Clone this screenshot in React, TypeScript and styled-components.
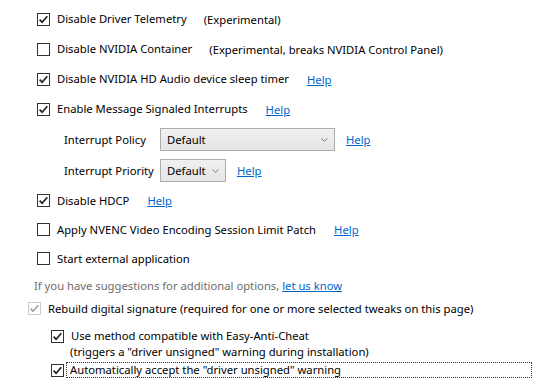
import styled, { createGlobalStyle } from "styled-components";

const GlobalStyle = createGlobalStyle`
  html, body {
    margin: 0;
    padding: 0;
    background: #ffffff;
  }
  body {
    font-family: "Noto Sans", "Open Sans", sans-serif;
    font-size: 11.25px;
    color: #000000;
  }
`;

const Page = styled.div`
  width: 548px;
  height: 392px;
  box-sizing: border-box;
  padding: 4px 0 0 37px;
  display: flex;
  flex-direction: column;
  overflow: hidden;
`;

const Row = styled.div<{ $h?: number; $indent?: number; $bottom?: boolean }>`
  display: flex;
  align-items: ${({ $bottom }) => ($bottom ? "flex-end" : "center")};
  height: ${({ $h }) => $h ?? 29}px;
  margin-left: ${({ $indent }) => $indent ?? 0}px;
  white-space: nowrap;
`;

const Box = styled.span<{ $disabled?: boolean }>`
  display: inline-flex;
  align-items: center;
  justify-content: center;
  flex: none;
  width: 13px;
  height: 13px;
  box-sizing: border-box;
  border: 1px solid ${({ $disabled }) => ($disabled ? "#cccccc" : "#333333")};
  background: #ffffff;
  margin-right: 6px;
`;

const Label = styled.span<{ $focus?: boolean }>`
  line-height: 14px;
  padding: 0 1px;
  ${({ $focus }) =>
    $focus
      ? `
    flex: 1;
    margin-right: 17px;
    margin-left: -3px;
    padding-left: 3px;
    outline: 1px dotted #333333;
  `
      : ""}
`;

const Note = styled.span`
  margin-left: 16px;
`;

const Link = styled.a<{ $gap?: number }>`
  color: #0066cc;
  text-decoration: underline;
  margin-left: ${({ $gap }) => $gap ?? 17}px;
  cursor: pointer;
`;

const Field = styled.span`
  width: 96px;
  margin-left: 27px;
`;

const Combo = styled.div<{ $w: number }>`
  display: flex;
  align-items: center;
  justify-content: space-between;
  box-sizing: border-box;
  width: ${({ $w }) => $w}px;
  height: 23px;
  padding: 0 6px 0 6px;
  border: 1px solid #adadad;
  background: linear-gradient(#f0f0f0, #e5e5e5);
`;

const Hint = styled.div`
  color: #6d6d6d;
  margin-left: -3px;
`;

const SubLine = styled.div`
  margin-left: 33px;
  line-height: 18px;
`;

function Check({ checked, disabled }: { checked?: boolean; disabled?: boolean }) {
  return (
    <Box $disabled={disabled}>
      {checked && (
        <svg width="11" height="11" viewBox="0 0 11 11">
          <path
            d="M1.6 5.6 L4.1 8.2 L9.3 2.2"
            fill="none"
            stroke={disabled ? "#a6a6a6" : "#222222"}
            strokeWidth="1.7"
          />
        </svg>
      )}
    </Box>
  );
}

function Chevron() {
  return (
    <svg width="7" height="4" viewBox="0 0 7 4">
      <path d="M0.5 0.5 L3.5 3.3 L6.5 0.5" fill="none" stroke="#7a7a7a" strokeWidth="1" />
    </svg>
  );
}

export default function App() {
  return (
    <>
      <GlobalStyle />
      <Page>
        <Row $h={30}>
          <Check checked />
          <Label>Disable Driver Telemetry</Label>
          <Note>(Experimental)</Note>
        </Row>
        <Row $h={30}>
          <Check />
          <Label>Disable NVIDIA Container</Label>
          <Note>(Experimental, breaks NVIDIA Control Panel)</Note>
        </Row>
        <Row $h={30}>
          <Check checked />
          <Label>Disable NVIDIA HD Audio device sleep timer</Label>
          <Link>Help</Link>
        </Row>
        <Row $h={30}>
          <Check checked />
          <Label>Enable Message Signaled Interrupts</Label>
          <Link>Help</Link>
        </Row>
        <Row $h={31}>
          <Field>Interrupt Policy</Field>
          <Combo $w={175}>
            <span>Default</span>
            <Chevron />
          </Combo>
          <Link $gap={11}>Help</Link>
        </Row>
        <Row $h={31}>
          <Field>Interrupt Priority</Field>
          <Combo $w={66}>
            <span>Default</span>
            <Chevron />
          </Combo>
          <Link $gap={11}>Help</Link>
        </Row>
        <Row>
          <Check checked />
          <Label>Disable HDCP</Label>
          <Link>Help</Link>
        </Row>
        <Row>
          <Check />
          <Label>Apply NVENC Video Encoding Session Limit Patch</Label>
          <Link>Help</Link>
        </Row>
        <Row>
          <Check />
          <Label>Start external application</Label>
        </Row>
        <Row $h={25}>
          <Hint>
            If you have suggestions for additional options, <Link $gap={0}>let us know</Link>
          </Hint>
        </Row>
        <Row $h={21} $indent={-9}>
          <Check checked disabled />
          <Label>Rebuild digital signature (required for one or more selected tweaks on this page)</Label>
        </Row>
        <Row $h={24} $indent={14} $bottom>
          <Check checked />
          <Label>Use method compatible with Easy-Anti-Cheat</Label>
        </Row>
        <SubLine>(triggers a "driver unsigned" warning during installation)</SubLine>
        <Row $h={18} $indent={14}>
          <Check checked />
          <Label $focus>Automatically accept the "driver unsigned" warning</Label>
        </Row>
      </Page>
    </>
  );
}
